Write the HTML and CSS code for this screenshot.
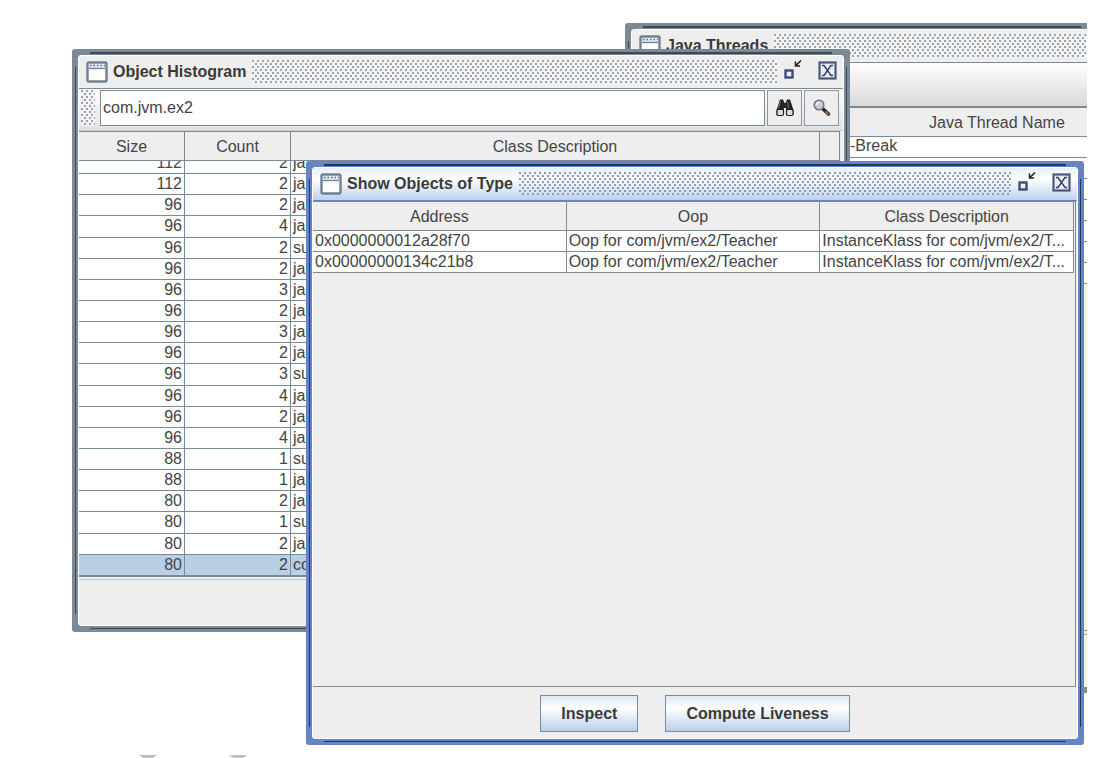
FILE: index.html
```html
<!DOCTYPE html>
<html lang="en">
<head>
<meta charset="utf-8">
<title>Object Histogram</title>
<link rel="stylesheet" href="styles.css">
</head>
<body>
<svg width="0" height="0" class="defs" aria-hidden="true">
  <symbol id="frame-icon" viewBox="0 0 22 22">
    <rect x="1.5" y="1.5" width="19" height="19" rx="1.5" fill="#fff" stroke="#6f8194" stroke-width="2.4"/>
    <rect x="3" y="3" width="16" height="4" fill="#dfe8f2"/>
    <path d="M4 4.5H19" stroke="#5f7388" stroke-width="1.4" stroke-dasharray="1.5 2"/>
    <path d="M3 7.5H19" stroke="#6f8194" stroke-width="1.3"/>
  </symbol>
  <symbol id="restore" viewBox="0 0 20 22">
    <rect x="2.5" y="11.5" width="7" height="7" fill="#e8f0fb" stroke="#3f4c74" stroke-width="2.4"/>
    <path d="M18 1.5L13.5 6M12.5 2.5V7H17" fill="none" stroke="#222" stroke-width="1.6"/>
  </symbol>
  <symbol id="close" viewBox="0 0 20 20">
    <rect x="1.5" y="1.5" width="16" height="16" fill="#e9effa" stroke="#4b587c" stroke-width="2.2"/>
    <path d="M4 4.500H6L13 14.500H15M15 4.500H13L6 14.500H4" fill="none" stroke="#333d5e" stroke-width="1.4"/>
  </symbol>
</svg>
<main class="desktop">
  <section class="window threads" aria-label="Java Threads">
    <div class="pane">
      <header class="titlebar"><svg class="app"><use href="#frame-icon"/></svg><h2>Java Threads</h2><span class="bumps"></span></header>
      <div class="band"></div>
      <table class="grid">
        <thead><tr><th>Java Thread Name</th></tr></thead>
        <tbody>
          <tr><td>-Break</td></tr><tr><td></td></tr><tr><td></td></tr><tr><td></td></tr><tr><td></td></tr><tr><td></td></tr><tr><td></td></tr>
        </tbody>
      </table>
      <div class="stack"></div>
      <div class="foot"></div>
    </div>
  </section>

  <section class="window histogram" aria-label="Object Histogram">
    <div class="pane">
      <header class="titlebar"><svg class="app"><use href="#frame-icon"/></svg><h2>Object Histogram</h2><span class="bumps"></span>
        <button class="ctl" aria-label="Minimize"><svg class="restore"><use href="#restore"/></svg></button><button class="ctl" aria-label="Close"><svg class="close"><use href="#close"/></svg></button></header>
      <div class="toolbar"><span class="bumps grip"></span>
        <input type="text" value="com.jvm.ex2" aria-label="Class name">
        <button class="tool" aria-label="Find"><svg width="20" height="20" viewBox="0 0 20 20">
          <path d="M5 1.500H8L9.500 5H10.500L12 1.500H15L18.500 12V17H11V10H9V17H1.500V12Z" fill="#252429"/>
          <path d="M5.500 3.500L3.500 10M12.500 3.500L13.500 10" stroke="#77777f" stroke-width="1"/>
          <rect x="2" y="11.500" width="6.500" height="6" rx="1.500" fill="#d5def0" stroke="#222" stroke-width="1.200"/>
          <rect x="11.500" y="11.500" width="6.500" height="6" rx="1.500" fill="#d5def0" stroke="#222" stroke-width="1.200"/>
        </svg></button>
        <button class="tool" aria-label="Show objects"><svg width="20" height="20" viewBox="0 0 20 20">
          <path d="M11 11L16.500 16" stroke="#2c2523" stroke-width="3.600" stroke-linecap="round"/>
          <path d="M13.500 13.500L17 16.500" stroke="#b08550" stroke-width="1.500"/>
          <circle cx="7" cy="7" r="4.800" fill="#c9cde3" stroke="#77757f" stroke-width="1.600"/>
          <path d="M4.500 7A3 3 0 0 1 7 4.300" fill="none" stroke="#fff" stroke-width="1.300"/>
        </svg></button>
      </div>
      <div class="scroller">
        <table class="grid heads"><colgroup><col class="num"><col class="num"><col><col class="bar"></colgroup>
          <thead><tr><th>Size</th><th>Count</th><th>Class Description</th><th></th></tr></thead></table>
        <div class="rows">
          <table class="grid body"><colgroup><col class="num"><col class="num"><col></colgroup>
            <tbody>
              <tr><td>112</td><td>2</td><td>ja</td></tr>
              <tr><td>112</td><td>2</td><td>ja</td></tr>
              <tr><td>96</td><td>2</td><td>ja</td></tr>
              <tr><td>96</td><td>4</td><td>ja</td></tr>
              <tr><td>96</td><td>2</td><td>su</td></tr>
              <tr><td>96</td><td>2</td><td>ja</td></tr>
              <tr><td>96</td><td>3</td><td>ja</td></tr>
              <tr><td>96</td><td>2</td><td>ja</td></tr>
              <tr><td>96</td><td>3</td><td>ja</td></tr>
              <tr><td>96</td><td>2</td><td>ja</td></tr>
              <tr><td>96</td><td>3</td><td>su</td></tr>
              <tr><td>96</td><td>4</td><td>ja</td></tr>
              <tr><td>96</td><td>2</td><td>ja</td></tr>
              <tr><td>96</td><td>4</td><td>ja</td></tr>
              <tr><td>88</td><td>1</td><td>su</td></tr>
              <tr><td>88</td><td>1</td><td>ja</td></tr>
              <tr><td>80</td><td>2</td><td>ja</td></tr>
              <tr><td>80</td><td>1</td><td>su</td></tr>
              <tr><td>80</td><td>2</td><td>ja</td></tr>
              <tr class="selected"><td>80</td><td>2</td><td>co</td></tr>
            </tbody></table>
        </div>
      </div>
      <div class="foot"></div>
    </div>
  </section>

  <section class="window dialog active" aria-label="Show Objects of Type">
    <div class="pane">
      <header class="titlebar"><svg class="app"><use href="#frame-icon"/></svg><h2>Show Objects of Type</h2><span class="bumps"></span>
        <button class="ctl" aria-label="Minimize"><svg class="restore"><use href="#restore"/></svg></button><button class="ctl" aria-label="Close"><svg class="close"><use href="#close"/></svg></button></header>
      <div class="objects">
        <table class="grid">
          <thead><tr><th>Address</th><th>Oop</th><th>Class Description</th></tr></thead>
          <tbody>
            <tr><td>0x0000000012a28f70</td><td>Oop for com/jvm/ex2/Teacher</td><td>InstanceKlass for com/jvm/ex2/T...</td></tr>
            <tr><td>0x00000000134c21b8</td><td>Oop for com/jvm/ex2/Teacher</td><td>InstanceKlass for com/jvm/ex2/T...</td></tr>
          </tbody>
        </table>
      </div>
      <div class="actions"><button>Inspect</button><button>Compute Liveness</button></div>
    </div>
  </section>
  <div class="marks"><i></i><i></i></div>
</main>
</body>
</html>
```
FILE: styles.css
```css
* { box-sizing: border-box; }
body { margin: 0; background: #fff; color: #444; font: 16px/20px "Liberation Sans", Arial, sans-serif; }
button, input { font: inherit; color: inherit; }
.defs { position: absolute; }
.desktop { position: relative; min-height: 100vh; overflow: hidden; margin-right: 9px; }

.window {
  --edge: #7c8a98;
  --line: #3c4a58;
  --dot: #9aa3ac;
  position: absolute;
  padding: 6px;
  border-radius: 3px;
  background:
    linear-gradient(var(--line), var(--line)) 18px 3px / calc(100% - 36px) 2px no-repeat,
    linear-gradient(var(--line), var(--line)) 18px calc(100% - 3px) / calc(100% - 36px) 1px no-repeat,
    linear-gradient(var(--line), var(--line)) 3px 18px / 1px calc(100% - 36px) no-repeat,
    linear-gradient(var(--line), var(--line)) calc(100% - 3px) 18px / 1px calc(100% - 36px) no-repeat,
    var(--edge);
}
.active { --edge: #6684c4; --line: #26355c; --dot: #889bbd; }
.threads { top: 23px; left: 625px; right: -12px; height: 670px; }
.histogram { top: 49px; left: 72px; right: 237px; }
.dialog { top: 161px; left: 306px; right: 3px; }

.pane { display: flex; flex-direction: column; height: 100%; background: #eee; border: 1px solid #fff; border-radius: 3px; }
.titlebar { display: flex; align-items: center; height: 33px; padding: 0 5px 0 7px; border-bottom: 1px solid #7a8a99; }
.active .titlebar { background: linear-gradient(#e6effa, #fff 35%, #bdd2ec); border-color: #6382bf; }
.titlebar h2 { margin: 0 6px 0 5px; font-size: 16px; line-height: 20px; color: #3a3a3a; white-space: nowrap; }
.app { width: 22px; height: 22px; flex: none; }
.bumps {
  flex: 1;
  height: 24px;
  background:
    linear-gradient(var(--dot), var(--dot)) 0 0 / 0 0,
    radial-gradient(circle at 1px 1px, var(--dot) 1px, transparent 1px) 0 0 / 5px 6px,
    radial-gradient(circle at 1px 1px, var(--dot) 1px, transparent 1px) 3px 3px / 5px 6px,
    #f4f4f4;
}
.active .bumps { background-color: transparent; }
.ctl { display: flex; padding: 0; border: 0; background: none; }
.restore { width: 20px; height: 22px; margin: 0 15px 4px 6px; }
.close { width: 20px; height: 20px; margin-bottom: 3px; }

.toolbar { display: flex; gap: 2px; height: 42px; padding: 1px 4px 4px 2px; background: linear-gradient(#fff, #e2e2e2); border-bottom: 1px solid #ccc; }
.grip { flex: none; width: 14px; height: 36px; margin-right: 3px; }
.toolbar input { flex: 1; min-width: 0; height: 36px; padding: 0 2px; border: 1px solid #7a8a99; background: #fff; }
.tool { display: flex; align-items: center; justify-content: center; width: 35px; height: 36px; padding: 0; border: 1px solid #8d969f; background: #eee; }

.grid { width: 100%; table-layout: fixed; border-spacing: 0; }
.grid th { height: 29px; padding: 2px 0 0; font-weight: 400; background: #eee; border: solid #7a8a99; border-width: 0 1px 1px 0; }
.grid td { height: 21px; padding: 0 2px; line-height: 20px; vertical-align: top; background: #fff; border: solid #7a8a99; border-width: 0 1px 1px 0; white-space: nowrap; overflow: hidden; }
.num { width: 106px; }
.bar { width: 20px; }
.scroller { margin-right: 3px; border-top: 1px solid #7a8a99; }
.rows { display: flex; align-items: flex-end; height: 416px; overflow: hidden; background: #fff; border-bottom: 1px solid #7a8a99; }
.body { height: 423px; flex: none; }
.body td:nth-child(-n+2) { text-align: right; }
.grid .selected td { background: #b8cfe5; }
.histogram .foot { height: 46px; margin-top: 2px; border-top: 1px solid #bcc; }

.objects { height: 486px; margin-right: 1px; padding-right: 1px; border: solid #7a8a99; border-width: 1px 1px 1px 0; }
.actions { display: flex; justify-content: center; gap: 27px; padding: 8px 0 6px; }
.actions button { height: 37px; padding: 0 20px; font-weight: 700; color: #3a3a3a; border: 1px solid #7a8a99; background: linear-gradient(#dde8f3, #fff 35%, #b8cfe8); }

.band { height: 45px; background: linear-gradient(#fff, #d9d9d9); border-bottom: 2px solid #7a8a99; }
.threads .grid th { padding-left: 297px; text-align: left; }
.threads .grid td { padding-left: 218px; line-height: 18px; }
.stack { flex: 1; background: #f1f5ea; border-bottom: 1px solid #7a8a99; }
.threads .foot { height: 52px; margin-top: 3px; background: #f1f5ea; border-top: 1px solid #9ab; }

.marks { position: absolute; left: 139px; bottom: 0; display: flex; gap: 72px; }
.marks i { width: 18px; height: 3px; background: #c0c0c0; clip-path: polygon(0 0, 100% 0, 78% 100%, 22% 100%); }
```
